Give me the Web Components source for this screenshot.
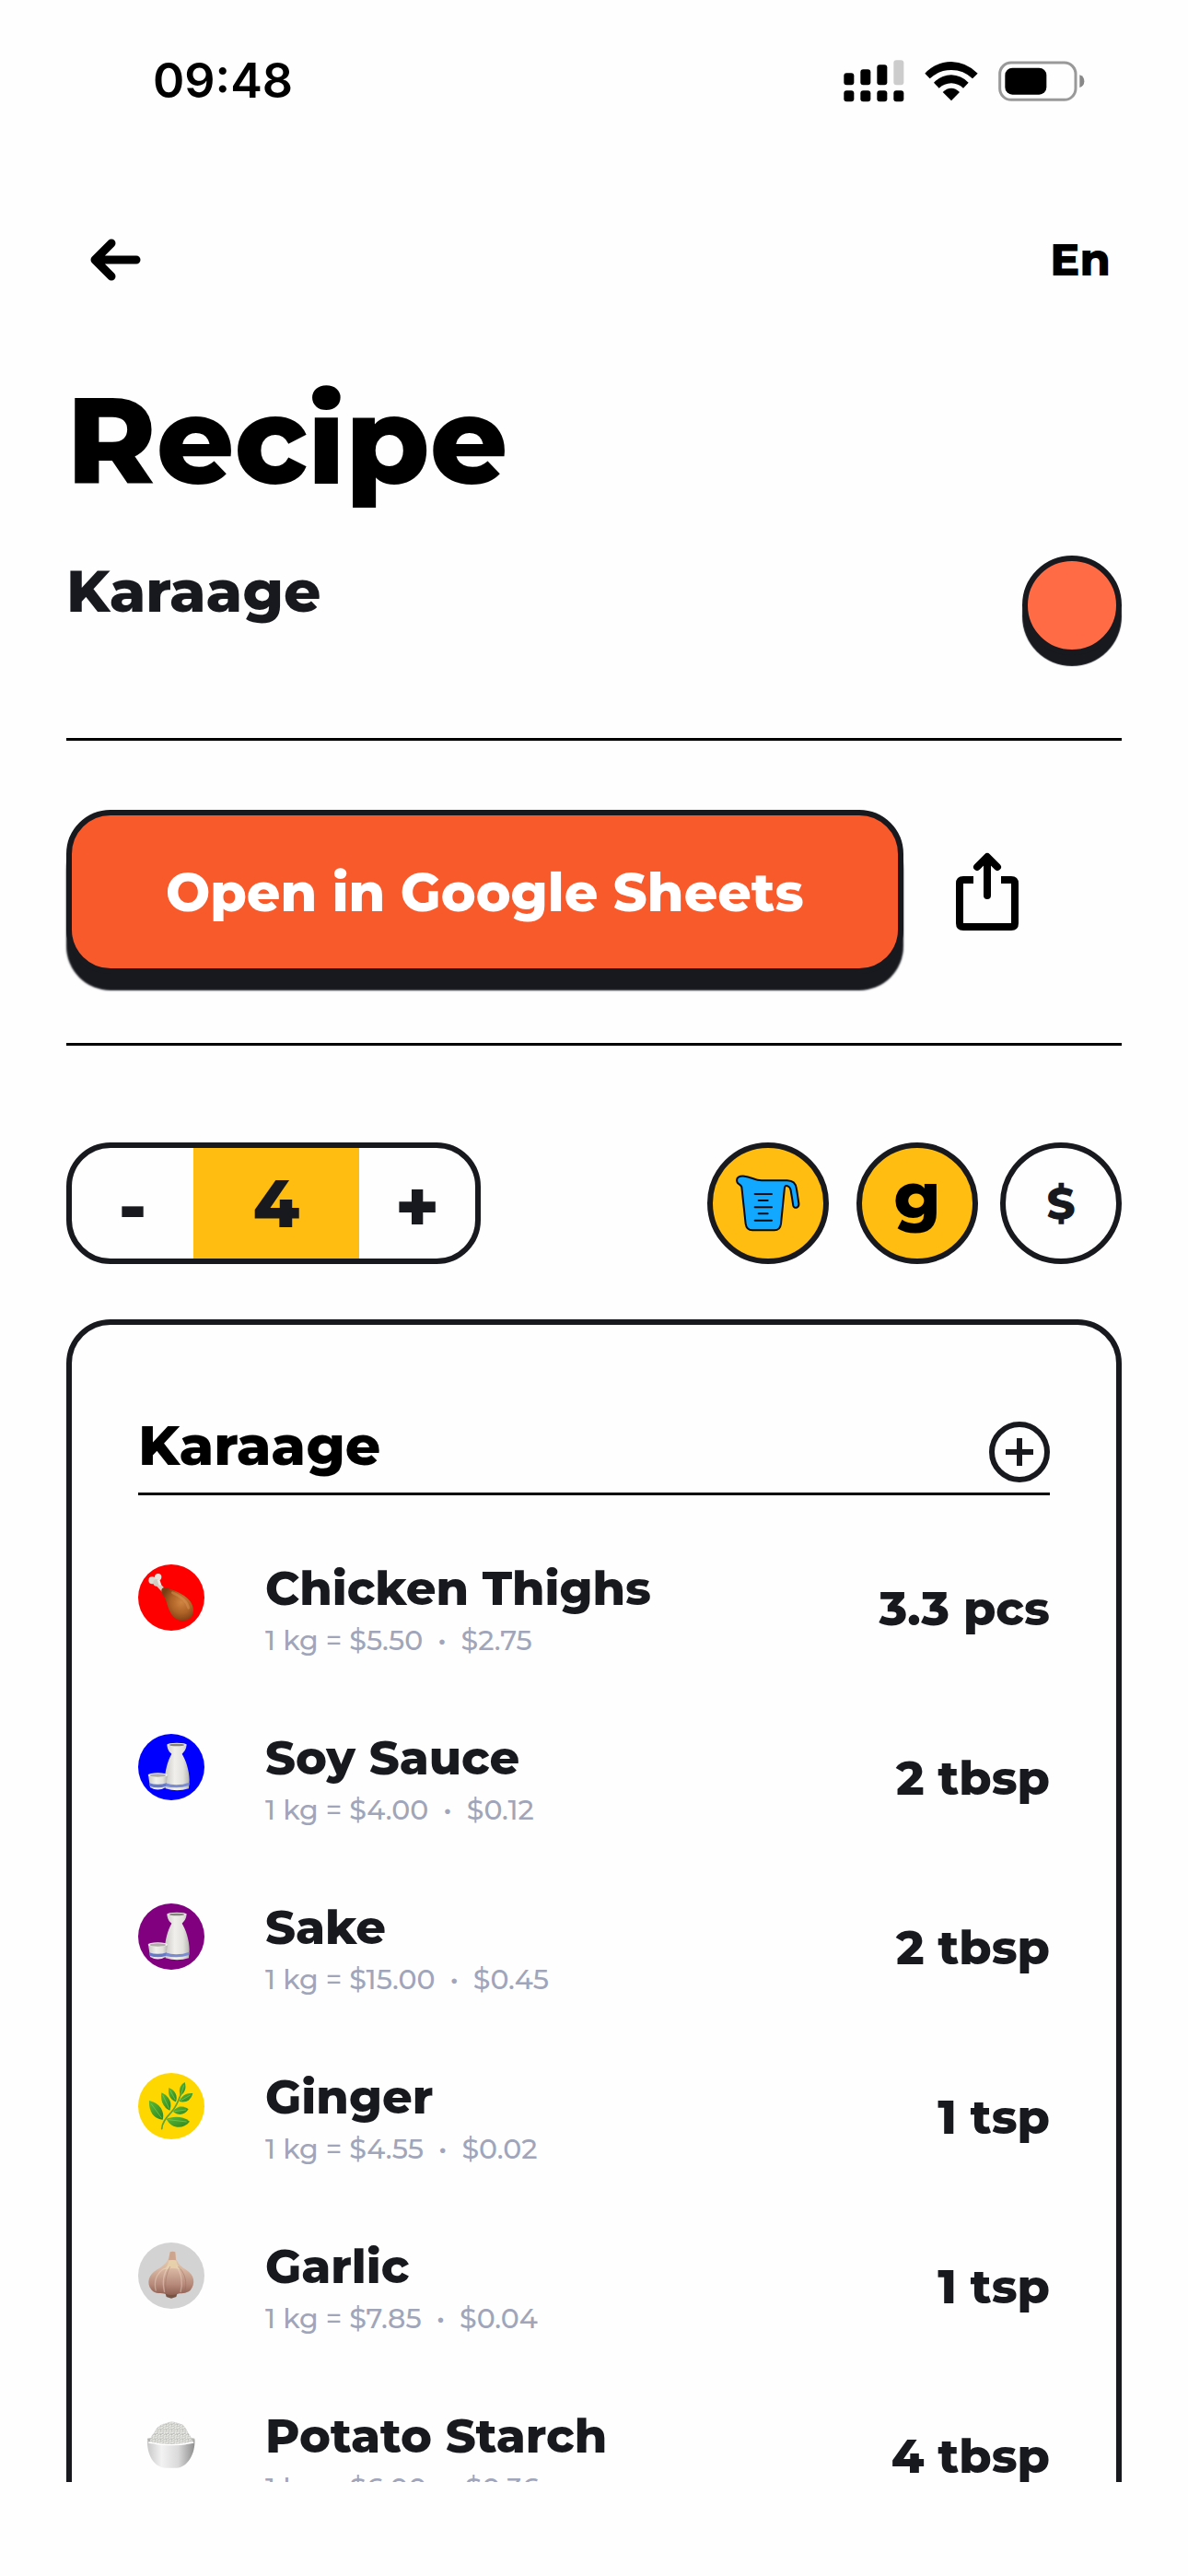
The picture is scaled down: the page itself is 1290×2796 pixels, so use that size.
<!DOCTYPE html>
<html lang="en">
<head>
<meta charset="utf-8">
<meta name="viewport" content="width=device-width, initial-scale=1">
<title>Recipe</title>
<style>
  body {
    margin: 0;
    background: #fefefe;
    color: #18191f;
    font-family: Montserrat, "Open Sans", sans-serif;
    --ink: #18191f;
    --yellow: #ffbd12;
    --line: 6px;
  }
</style>
</head>
<body>

<recipe-page>
  <status-bar slot="top" time="09:48"></status-bar>
  <nav-bar slot="top">En</nav-bar>
  <recipe-title slot="top" name="Karaage">Recipe</recipe-title>
  <sheet-actions slot="top">Open in Google Sheets</sheet-actions>
  <portion-stepper slot="controls" value="4"></portion-stepper>
  <unit-switch slot="controls"></unit-switch>
  <ingredient-card heading="Karaage">
    <ingredient-row icon="chicken" color="#ff0000" amount="3.3 pcs" price="1 kg = $5.50" cost="$2.75">Chicken Thighs</ingredient-row>
    <ingredient-row icon="sake" color="#0000ff" amount="2 tbsp" price="1 kg = $4.00" cost="$0.12">Soy Sauce</ingredient-row>
    <ingredient-row icon="sake" color="#800080" amount="2 tbsp" price="1 kg = $15.00" cost="$0.45">Sake</ingredient-row>
    <ingredient-row icon="herb" color="#ffd700" amount="1 tsp" price="1 kg = $4.55" cost="$0.02">Ginger</ingredient-row>
    <ingredient-row icon="garlic" color="#d3d3d3" amount="1 tsp" price="1 kg = $7.85" cost="$0.04">Garlic</ingredient-row>
    <ingredient-row icon="rice" color="transparent" amount="4 tbsp" price="1 kg = $6.00" cost="$0.36">Potato Starch</ingredient-row>
  </ingredient-card>
</recipe-page>

<script>
const reset = `
  * { box-sizing: border-box; }
  h1, h2, h3, p { margin: 0; }
  svg { display: block; }
  button {
    margin: 0;
    padding: 0;
    border: 0;
    background: none;
    color: inherit;
    font: inherit;
    cursor: pointer;
  }
`

/**
 * Attaches an open shadow root with the shared reset in front.
 */
function render (element, html) {
  element.attachShadow({ mode: 'open' }).innerHTML = `<style>${reset}</style>${html}`
}

/* Food pictures, all on a 216 x 216 canvas */
const foods = {
  chicken: `
    <defs><radialGradient id="meat" cx=".62" cy=".45" r=".6">
      <stop offset="0" stop-color="#cf8442"/><stop offset=".55" stop-color="#ad6226"/><stop offset="1" stop-color="#7a3c12"/>
    </radialGradient></defs>
    <path d="M58 58 L84 86" stroke="#d9cfc4" stroke-width="14"/>
    <circle cx="46" cy="52" r="12" fill="#ddd8d0"/><circle cx="65" cy="41" r="11" fill="#e8e3dc"/>
    <circle cx="60" cy="60" r="11" fill="#d2cbc2"/><path d="M66 50 L72 68" stroke="#eee9e2" stroke-width="8"/>
    <path d="M76 88 C74 76 88 72 98 78 C130 88 178 110 180 146 C182 174 162 186 138 182 C108 178 98 142 92 122 C88 106 78 100 76 88Z" fill="url(#meat)"/>
    <path d="M112 92 C140 104 160 120 164 142" fill="none" stroke="#dd9a58" stroke-opacity=".45" stroke-width="8" stroke-linecap="round"/>`,
  sake: `
    <defs><linearGradient id="clay"><stop offset="0" stop-color="#c9c8c4"/><stop offset=".4" stop-color="#f0efeb"/><stop offset=".75" stop-color="#e2e1dc"/><stop offset="1" stop-color="#b5b4b0"/></linearGradient></defs>
    <path d="M94 35 C95 50 101 58 109 65 C96 88 87 122 87 150 L89 178 Q127 190 165 178 L167 150 C167 120 155 84 143 65 C150 58 157 49 158 35Z" fill="url(#clay)"/>
    <ellipse cx="126" cy="35" rx="32" ry="6" fill="#eceae6"/><ellipse cx="126" cy="36" rx="25" ry="4" fill="#85817c"/>
    <path d="M88 160 Q127 172 167 158 L166 168 Q127 181 88 170Z" fill="#7b8bd2"/>
    <path d="M33 134 L39 174 Q64 189 90 174 L96 134Z" fill="url(#clay)"/>
    <ellipse cx="64" cy="134" rx="32" ry="7" fill="#f3f1ed"/><ellipse cx="64" cy="135" rx="26" ry="5" fill="#b0aca7"/>
    <path d="M36 160 Q64 169 93 160 L91 170 Q64 180 38 170Z" fill="#6679c8"/>`,
  herb: `
    <defs><linearGradient id="leaf" x1="0" y1="0" x2="1" y2="1"><stop offset="0" stop-color="#5dbb35"/><stop offset="1" stop-color="#2c8420"/></linearGradient></defs>
    <path d="M77 182 C78 160 92 144 108 128 C124 110 132 92 142 60" fill="none" stroke="#57a536" stroke-width="5" stroke-linecap="round"/>
    <g fill="url(#leaf)">
      <path d="M36 90 C68 96 88 124 80 152 C50 150 34 124 36 90Z"/>
      <path d="M76 64 C102 76 112 98 103 122 C80 112 72 88 76 64Z"/>
      <path d="M100 48 C120 56 130 74 123 94 C102 86 96 68 100 48Z"/>
      <path d="M152 30 C158 50 152 64 138 74 C130 56 136 40 152 30Z"/>
      <path d="M178 66 C172 90 154 98 134 93 C140 74 158 64 178 66Z"/>
      <path d="M164 118 C146 104 124 108 114 126 C130 140 152 138 164 118Z"/>
      <path d="M168 158 C144 138 108 142 92 150 C110 184 148 184 168 158Z"/>
    </g>
    <g fill="none" stroke="#84ce55" stroke-width="2"><path d="M42 100L76 146M80 72L101 116M104 56L121 88M149 40L140 70M170 72L138 90M156 120L118 125M158 159L98 152"/></g>`,
  garlic: `
    <defs>
      <linearGradient id="bulb" x1="0" y1="0" x2="0" y2="1"><stop offset="0" stop-color="#e8d0b2"/><stop offset=".4" stop-color="#d9b8a2"/><stop offset=".75" stop-color="#b78a7c"/><stop offset="1" stop-color="#8f6053"/></linearGradient>
    </defs>
    <path d="M88 164 H128 L124 177 L108 182 L92 177Z" fill="#765444"/>
    <path d="M104 31 Q112 27 121 31 C121 62 135 76 155 88 C184 106 188 134 170 156 C156 168 138 164 128 168 Q108 174 90 168 C76 164 56 170 43 154 C26 132 34 104 62 88 C86 76 101 58 104 31Z" fill="url(#bulb)"/>
    <path d="M104 31 Q112 27 121 31 L123 57 H99Z" fill="#cda58e"/>
    <path d="M100 60 Q112 54 124 60 C126 74 134 80 140 86 L112 84 L82 88 C92 82 98 72 100 60Z" fill="#eddcae" fill-opacity=".6"/>
    <g fill="none" stroke="#f0d8c8" stroke-opacity=".45" stroke-width="4"><path d="M100 76 C82 100 78 130 86 162M124 76 C142 100 146 134 138 162M86 84 C60 100 50 126 58 158"/></g>
    <g fill="none" stroke="#95695e" stroke-opacity=".4" stroke-width="3"><path d="M104 78 C90 104 86 136 92 164M130 78 C154 100 160 130 152 160"/></g>`,
  rice: `
    <defs>
      <linearGradient id="bowl"><stop offset="0" stop-color="#c8c8c8"/><stop offset=".3" stop-color="#f2f2f2"/><stop offset=".65" stop-color="#dadada"/><stop offset="1" stop-color="#8e8e8e"/></linearGradient>
      <pattern id="grain" width="18" height="16" patternUnits="userSpaceOnUse"><rect width="18" height="16" fill="#c6c6c3"/><path d="M2 4L7 2M11 7L15 3M4 12L8 9M12 14L17 12" stroke="#ededea" stroke-width="4" stroke-linecap="round"/><path d="M8 5L10 8M1 8L3 10M11 11L13 11" stroke="#94948f" stroke-width="2"/></pattern>
    </defs>
    <path d="M30 86 Q107 70 184 86 L181 106 H33Z" fill="#b4b4b2"/>
    <path d="M38 98 C40 76 52 70 58 56 C72 38 84 40 96 34 C112 28 128 36 142 40 C154 46 158 60 166 72 C172 80 176 88 177 100 Q107 112 38 98Z" fill="url(#grain)"/>
    <path d="M30 88 Q32 103 60 106 H154 Q182 103 184 88 C188 138 158 182 126 182 H90 C52 182 27 138 30 88Z" fill="url(#bowl)"/>
    <path d="M34 99 Q107 115 181 99" fill="none" stroke="#fff" stroke-width="4"/>`
}

customElements.define('recipe-page',
  class extends HTMLElement {
    constructor () {
      super()
      render(this, `
<style>
  :host {
    display: flex;
    flex-direction: column;
    height: 100vh;
    box-sizing: border-box;
    padding: 0 72px 102px;
    overflow: hidden;
  }
  .scroll {
    flex: 1;
    min-height: 0;
    overflow: hidden;
  }
  .controls {
    display: flex;
    justify-content: space-between;
    align-items: center;
    margin: 105px 0 60px;
  }
</style>
<slot name="top"></slot>
<main class="scroll">
  <div class="controls"><slot name="controls"></slot></div>
  <slot></slot>
</main>`)
    }
  }
)

customElements.define('status-bar',
  class extends HTMLElement {
    constructor () {
      super()
      render(this, `
<style>
  :host {
    display: flex;
    align-items: center;
    justify-content: space-between;
    height: 176px;
    padding: 0 40px 0 94px;
    box-sizing: border-box;
    color: #000;
    font: 600 52px/60px Inter, sans-serif;
  }
  .icons {
    display: flex;
    align-items: center;
    gap: 22px;
  }
</style>
<span>${this.getAttribute('time')}</span>
<div class="icons">
  <svg width="66" height="46" viewBox="107 71 198 138" aria-hidden="true">
    <rect x="108" y="114" width="33" height="39" rx="9"/>
    <rect x="162" y="102" width="33" height="51" rx="9"/>
    <rect x="216" y="87" width="33" height="66" rx="9"/>
    <rect x="270" y="72" width="33" height="81" rx="9" fill="#ccc"/>
    <rect x="108" y="171" width="33" height="36" rx="9"/>
    <rect x="162" y="171" width="33" height="36" rx="9"/>
    <rect x="216" y="171" width="33" height="36" rx="9"/>
    <rect x="270" y="171" width="33" height="36" rx="9"/>
  </svg>
  <svg width="58" height="44" viewBox="371 72 174 132" aria-hidden="true">
    <path d="M372 113 Q408 76 458 75 Q507 76 544 113 L527 130 Q498 102 458 102 Q417 102 388 130Z"/>
    <path d="M401 143 Q425 119 458 118 Q490 119 514 143 L497 161 Q480 146 458 145 Q435 146 418 161Z"/>
    <path d="M430 174 Q443 161 458 161 Q472 161 485 174 L458 202Z"/>
  </svg>
  <svg width="94" height="44" viewBox="611 73 282 132" aria-hidden="true">
    <rect x="616" y="79" width="247" height="121" rx="37" fill="none" stroke="#999" stroke-width="9"/>
    <rect x="633" y="96" width="135" height="87" rx="24"/>
    <path d="M876 119 Q891 124 891 140 Q891 155 876 160Z" fill="#888"/>
  </svg>
</div>`)
    }
  }
)

customElements.define('nav-bar',
  class extends HTMLElement {
    constructor () {
      super()
      render(this, `
<style>
  :host {
    display: flex;
    align-items: center;
    justify-content: space-between;
    height: 212px;
    padding: 0 12px 0 24px;
    box-sizing: border-box;
    color: #000;
    font-size: 48px;
    font-weight: 800;
    line-height: 60px;
  }
</style>
<button type="button" aria-label="Back">
  <svg width="58" height="48" viewBox="0 0 58 48" fill="none" stroke="#000" stroke-width="9" stroke-linecap="round" stroke-linejoin="round"><path d="M52 24H7M25 6L7 24L25 42"/></svg>
</button>
<button type="button"><slot></slot></button>`)
    }
  }
)

customElements.define('recipe-title',
  class extends HTMLElement {
    constructor () {
      super()
      render(this, `
<style>
  :host {
    display: block;
    padding: 10px 0 90px;
    border-bottom: 3px solid #000;
  }
  h1 {
    color: #000;
    font-size: 132px;
    font-weight: 800;
    line-height: 160px;
  }
  .row {
    display: flex;
    align-items: flex-start;
    justify-content: space-between;
    margin-top: 45px;
  }
  h2 {
    font-size: 63px;
    font-weight: 800;
    line-height: 78px;
  }
  .swatch {
    width: 108px;
    height: 108px;
    border: var(--line) solid var(--ink);
    border-radius: 50%;
    background: #ff6b45;
    box-shadow: 0 12px 1px var(--ink);
  }
</style>
<h1><slot></slot></h1>
<div class="row">
  <h2>${this.getAttribute('name')}</h2>
  <button type="button" class="swatch" aria-label="Colour"></button>
</div>`)
    }
  }
)

customElements.define('sheet-actions',
  class extends HTMLElement {
    constructor () {
      super()
      render(this, `
<style>
  :host {
    display: flex;
    align-items: center;
    gap: 57px;
    padding: 75px 0;
    border-bottom: 3px solid #000;
  }
  .open {
    padding: 0 102px;
    height: 178px;
    border: var(--line) solid var(--ink);
    border-radius: 48px;
    background: #f95a2c;
    box-shadow: 0 18px 2px var(--ink);
    color: #fff;
    font-size: 57px;
    font-weight: 800;
    white-space: nowrap;
  }
</style>
<button type="button" class="open"><slot></slot></button>
<button type="button" aria-label="Share">
  <svg width="68" height="86" viewBox="0 0 68 86" fill="none" stroke="#000" stroke-width="8" stroke-linecap="round" stroke-linejoin="round">
    <path d="M19 30H8Q4 30 4 34V77Q4 81 8 81H60Q64 81 64 77V34Q64 30 60 30H49" stroke-linecap="butt"/>
    <path d="M34 6V47M23 16L34 5L45 16"/>
  </svg>
</button>`)
    }
  }
)

customElements.define('portion-stepper',
  class extends HTMLElement {
    constructor () {
      super()
      render(this, `
<style>
  :host {
    display: grid;
    grid-template-columns: 132px 180px 126px;
    height: 132px;
    box-sizing: border-box;
    border: var(--line) solid var(--ink);
    border-radius: 48px;
    overflow: hidden;
    font-size: 72px;
    font-weight: 800;
    line-height: 120px;
    text-align: center;
  }
  button {
    padding-top: 8px;
    font-size: 80px;
    line-height: 110px;
  }
  output { background: var(--yellow); }
</style>
<button type="button" id="less">-</button>
<output>${this.getAttribute('value')}</output>
<button type="button" id="more">+</button>`)
      this.output = this.shadowRoot.querySelector('output')
      this.shadowRoot.querySelector('#less').addEventListener('click', () => this.step(-1))
      this.shadowRoot.querySelector('#more').addEventListener('click', () => this.step(1))
    }

    step (by) {
      this.output.value = Math.max(1, Number(this.output.value) + by)
    }
  }
)

customElements.define('unit-switch',
  class extends HTMLElement {
    constructor () {
      super()
      render(this, `
<style>
  :host, .group {
    display: flex;
    gap: 24px;
  }
  .group { gap: 30px; }
  button {
    display: grid;
    place-items: center;
    width: 132px;
    height: 132px;
    border: var(--line) solid var(--ink);
    border-radius: 50%;
    font-size: 48px;
    font-weight: 800;
    line-height: 60px;
  }
  button[aria-pressed="true"] { background: var(--yellow); }
  .gram {
    padding-bottom: 16px;
    color: #000;
    font-size: 72px;
  }
</style>
<div class="group">
  <button type="button" aria-pressed="true" aria-label="Cups">
    <svg width="70" height="62" viewBox="178 165 210 186" fill="#12a8ff" stroke="#0b0b10" stroke-width="6" stroke-linecap="round" stroke-linejoin="round">
      <path d="M182 188 C178 173 190 169 206 170 C228 172 240 184 262 184 H345 C365 184 374 195 376 212 L383 258 C385 274 368 277 365 266 L357 216 C354 200 340 198 337 206 L325 325 Q322 346 304 346 H232 Q213 346 210 325 L197 205 C193 195 184 197 182 188Z"/>
      <path d="M240 228H295M252 249H282M240 271H295M252 292H282M240 314H295"/>
    </svg>
  </button>
  <button type="button" aria-pressed="true" class="gram">g</button>
</div>
<button type="button" aria-pressed="false">$</button>`)
    }
  }
)

customElements.define('ingredient-card',
  class extends HTMLElement {
    constructor () {
      super()
      render(this, `
<style>
  :host {
    display: block;
    padding: 94px 72px;
    border: var(--line) solid var(--ink);
    border-radius: 48px;
  }
  header {
    display: flex;
    align-items: flex-start;
    justify-content: space-between;
    border-bottom: 3px solid #000;
  }
  h3 {
    color: #000;
    font-size: 60px;
    font-weight: 800;
    line-height: 74px;
  }
  button { margin: 11px 0; }
  .rows {
    display: grid;
    gap: 78px;
    margin-top: 70px;
  }
</style>
<header>
  <h3>${this.getAttribute('heading')}</h3>
  <button type="button" aria-label="Add ingredient">
    <svg width="66" height="66" viewBox="0 0 66 66" fill="none" stroke="#18191f" stroke-width="6"><circle cx="33" cy="33" r="30"/><path d="M18 33H48M33 18V48"/></svg>
  </button>
</header>
<div class="rows"><slot></slot></div>`)
    }
  }
)

customElements.define('ingredient-row',
  class extends HTMLElement {
    constructor () {
      super()
      render(this, `
<style>
  :host {
    display: grid;
    grid-template-columns: 72px 1fr auto;
    column-gap: 66px;
    align-items: center;
    font-size: 51px;
    font-weight: 800;
    line-height: 62px;
  }
  .icon {
    align-self: start;
    margin-top: 5px;
    border-radius: 50%;
    background: ${this.getAttribute('color')};
  }
  .price {
    display: flex;
    gap: 16px;
    margin-top: 8px;
    color: #a0a5b9;
    font-size: 30px;
    font-weight: 500;
    line-height: 36px;
  }
</style>
<svg class="icon" width="72" height="72" viewBox="0 0 216 216" aria-hidden="true">${foods[this.getAttribute('icon')]}</svg>
<div>
  <slot></slot>
  <div class="price"><span>${this.getAttribute('price')}</span><span>•</span><span>${this.getAttribute('cost')}</span></div>
</div>
<span>${this.getAttribute('amount')}</span>`)
    }
  }
)
</script>
</body>
</html>
